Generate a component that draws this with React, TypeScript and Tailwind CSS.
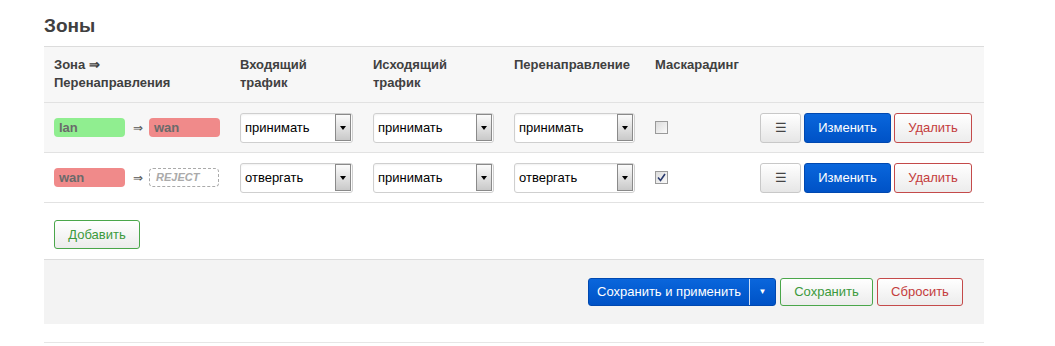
import React from 'react';

const font = { fontFamily: '"Liberation Sans", Arial, sans-serif' };

function Badge({ label, color }: { label: string; color: 'green' | 'red' }) {
  return (
    <span
      className={`inline-block w-[71px] h-[19px] rounded-[4px] px-[5px] text-[13px] font-bold leading-[19px] text-[#6a6a6a] ${
        color === 'green' ? 'bg-[#90ee90]' : 'bg-[#f08a8a]'
      }`}
    >
      {label}
    </span>
  );
}

function Select({ value, wide }: { value: string; wide?: boolean }) {
  return (
    <div
      className={`flex h-[30px] items-center rounded-[3px] border border-[#cfcfcf] bg-white pl-[4px] pr-[1px] shadow-[inset_0_1px_2px_rgba(0,0,0,0.06)] ${
        wide ? 'w-[121px]' : 'w-[113px]'
      }`}
    >
      <span className="flex-1 text-[13px] text-black">{value}</span>
      <span className="flex h-[27px] w-[16px] items-center justify-center border border-[#8a8a8a] bg-gradient-to-b from-[#fbfbfb] to-[#c9c9c9]">
        <span className="h-0 w-0 border-x-[3.5px] border-t-[4px] border-x-transparent border-t-black" />
      </span>
    </div>
  );
}

function Checkbox({ checked }: { checked?: boolean }) {
  return (
    <span className="flex h-[13px] w-[13px] items-center justify-center border border-[#9a9a9a] bg-gradient-to-br from-[#dcdcdc] to-[#fafafa]">
      {checked && (
        <svg width="9" height="9" viewBox="0 0 9 9">
          <path d="M1 4.5 L3.5 7.5 L8 1" fill="none" stroke="#2a3a6e" strokeWidth="1.6" />
        </svg>
      )}
    </span>
  );
}

function RowButtons() {
  return (
    <div className="flex items-center gap-[3px]">
      <button className="flex h-[30px] w-[41px] items-center justify-center rounded-[3px] border border-[#c8c8c8] bg-gradient-to-b from-white to-[#e6e6e6] text-[13px] text-[#444]">
        ☰
      </button>
      <button className="h-[30px] w-[87px] rounded-[3px] border border-[#0048b0] bg-gradient-to-b from-[#0a66dc] to-[#0052c6] text-[13px] text-white">
        Изменить
      </button>
      <button className="h-[30px] w-[78px] rounded-[3px] border border-[#c44a4a] bg-gradient-to-b from-white to-[#ececec] text-[13px] text-[#c43c3c]">
        Удалить
      </button>
    </div>
  );
}

const cols = 'grid grid-cols-[186px_133px_141px_141px_1fr_auto] items-center pl-[10px] pr-[12px]';

export default function App() {
  const rows = [
    { src: 'lan', dst: 'wan', inp: 'принимать', out: 'принимать', fwd: 'принимать', masq: false, bg: 'bg-[#f7f7f7]' },
    { src: 'wan', dst: null, inp: 'отвергать', out: 'принимать', fwd: 'отвергать', masq: true, bg: 'bg-white' },
  ];

  return (
    <div className="min-h-[346px] bg-white pl-[44px] pt-[14px] text-[13px] text-[#404040]" style={font}>
      <div className="w-[940px]">
        <h2 className="mb-[8px] h-[24px] text-[19px] font-bold leading-[24px] text-[#404040]">Зоны</h2>

        <div className="border-t border-[#dcdcdc]">
          <div className={`${cols} h-[55px] items-start bg-[#f7f7f7] pt-[9px] font-bold leading-[18px] text-[#404040]`}>
            <div>
              Зона ⇒
              <br />
              Перенаправления
            </div>
            <div>
              Входящий
              <br />
              трафик
            </div>
            <div>
              Исходящий
              <br />
              трафик
            </div>
            <div>Перенаправление</div>
            <div>Маскарадинг</div>
            <div />
          </div>

          {rows.map((r, i) => (
            <div key={i} className={`${cols} h-[50px] border-t border-[#e2e2e2] ${r.bg}`}>
              <div className="flex items-center">
                {r.src === 'lan' ? <Badge label="lan" color="green" /> : <Badge label="wan" color="red" />}
                <span className="ml-[8px] mr-[6px] text-[12px] text-[#555]">⇒</span>
                {r.dst ? (
                  <Badge label={r.dst} color="red" />
                ) : (
                  <span className="inline-block h-[19px] w-[70px] rounded-[4px] border border-dashed border-[#aaa] px-[6px] text-[11px] font-bold italic leading-[17px] text-[#aaa]">
                    REJECT
                  </span>
                )}
              </div>
              <Select value={r.inp} />
              <div>
                <Select value={r.out} wide />
              </div>
              <div>
                <Select value={r.fwd} wide />
              </div>
              <div>
                <Checkbox checked={r.masq} />
              </div>
              <RowButtons />
            </div>
          ))}
        </div>

        <div className="border-t border-[#e2e2e2] pb-[10px] pl-[10px] pt-[17px]">
          <button className="h-[29px] w-[86px] rounded-[3px] border border-[#4aa64a] bg-gradient-to-b from-white to-[#ececec] text-[13px] text-[#3c9a3c]">
            Добавить
          </button>
        </div>

        <div className="flex h-[65px] items-center justify-end gap-[4px] border-t border-[#dcdcdc] bg-[#f3f3f3] pr-[21px]">
          <div className="flex h-[28px] w-[188px] items-center rounded-[3px] border border-[#0048b0] bg-gradient-to-b from-[#0a66dc] to-[#0052c6] text-[13px] text-white">
            <span className="flex-1 text-center">Сохранить и применить</span>
            <span className="h-full w-px bg-white/80" />
            <span className="flex w-[25px] items-center justify-center text-[8px]">▼</span>
          </div>
          <button className="h-[28px] w-[93px] rounded-[3px] border border-[#4aa64a] bg-gradient-to-b from-white to-[#ececec] text-[13px] text-[#3c9a3c]">
            Сохранить
          </button>
          <button className="h-[28px] w-[86px] rounded-[3px] border border-[#c44a4a] bg-gradient-to-b from-white to-[#ececec] text-[13px] text-[#c43c3c]">
            Сбросить
          </button>
        </div>

        <div className="mt-[18px] border-t border-[#e6e6e6]" />
      </div>
    </div>
  );
}
